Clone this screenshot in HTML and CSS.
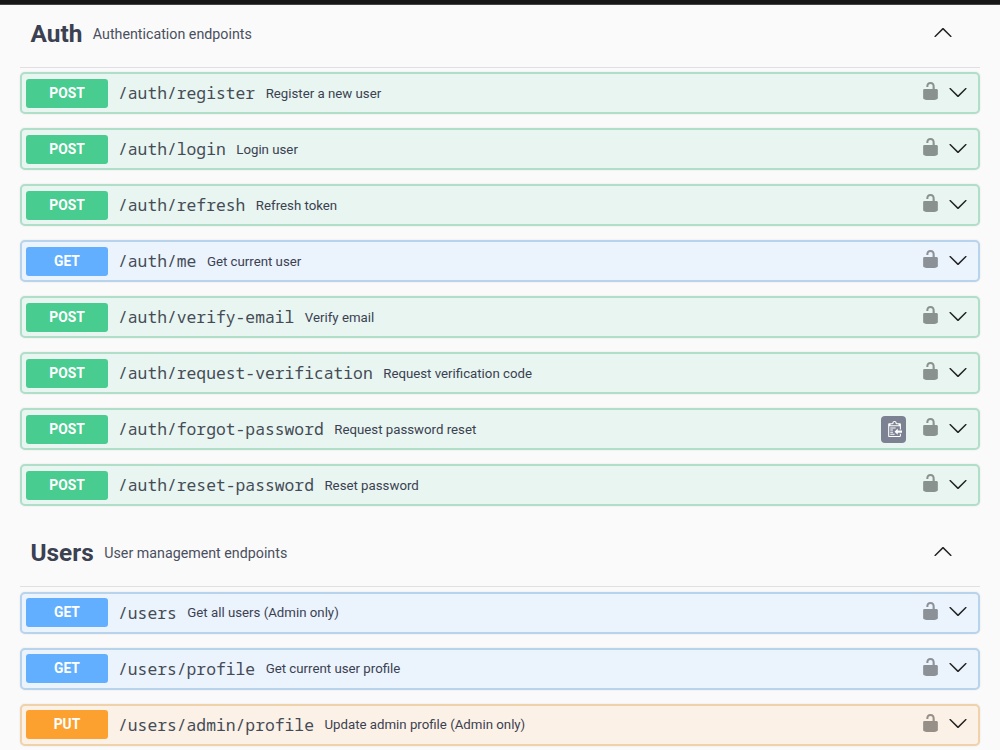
FILE: index.html
```
<!DOCTYPE html>
<html lang="en">
<head>
<meta charset="utf-8">
<title>API documentation</title>
<link rel="stylesheet" href="styles.css">
</head>
<body>
<svg class="sprite" aria-hidden="true">
  <symbol id="lock" viewBox="0 0 20 20" preserveAspectRatio="none"><path d="M15.800 8H14V5.600C14 2.703 12.665 1 10 1 7.334 1 6 2.703 6 5.600V6h2v-.801C8 3.754 8.797 3 10 3c1.203 0 2 .754 2 2.199V8H4c-.553 0-1 .646-1 1.199V17c0 .549.428 1.139.951 1.307l1.197.387C5.672 18.861 6.550 19 7.100 19h5.800c.549 0 1.428-.139 1.951-.307l1.196-.387c.524-.167.953-.757.953-1.306V9.199C17 8.646 16.352 8 15.800 8z"/></symbol>
  <symbol id="arrow" viewBox="0 0 20 20"><path d="M17.418 6.109c.272-.268.709-.268.979 0s.271.701 0 .969l-7.908 7.830c-.270.268-.707.268-.979 0l-7.908-7.830c-.270-.268-.270-.701 0-.969.271-.268.709-.268.979 0L10 13.250l7.418-7.141z"/></symbol>
  <symbol id="clip" viewBox="0 0 15 16"><path fill-rule="evenodd" d="M4 12h4v1H4v-1zm5-6H4v1h5V6zm2 3V7l-3 3 3 3v-2h5V9h-5zM6.500 8H4v1h2.500V8zM4 11h2.500v-1H4v1zm9 1h1v2c-.020.280-.110.520-.300.700-.190.180-.420.280-.700.300H3c-.550 0-1-.450-1-1V3c0-.550.450-1 1-1h3c0-1.110.890-2 2-2 1.110 0 2 .890 2 2h3c.550 0 1 .450 1 1v5h-1V5H3v9h10v-2zM4 4h8c0-.550-.450-1-1-1h-1c-.550 0-1-.450-1-1s-.450-1-1-1-1 .450-1 1-.450 1-1 1H5c-.550 0-1 .450-1 1z"/></symbol>
</svg>
<div class="topbar"></div>
<main class="docs">
  <section class="group">
    <header class="group-head"><h2>Auth</h2><p>Authentication endpoints</p><svg class="arrow up"><use href="#arrow"/></svg></header>
    <div class="row post"><span class="method">POST</span><code>/auth/register</code><span class="summary">Register a new user</span><svg class="lock"><use href="#lock"/></svg><svg class="arrow"><use href="#arrow"/></svg></div>
    <div class="row post"><span class="method">POST</span><code>/auth/login</code><span class="summary">Login user</span><svg class="lock"><use href="#lock"/></svg><svg class="arrow"><use href="#arrow"/></svg></div>
    <div class="row post"><span class="method">POST</span><code>/auth/refresh</code><span class="summary">Refresh token</span><svg class="lock"><use href="#lock"/></svg><svg class="arrow"><use href="#arrow"/></svg></div>
    <div class="row get"><span class="method">GET</span><code>/auth/me</code><span class="summary">Get current user</span><svg class="lock"><use href="#lock"/></svg><svg class="arrow"><use href="#arrow"/></svg></div>
    <div class="row post"><span class="method">POST</span><code>/auth/verify-email</code><span class="summary">Verify email</span><svg class="lock"><use href="#lock"/></svg><svg class="arrow"><use href="#arrow"/></svg></div>
    <div class="row post"><span class="method">POST</span><code>/auth/request-verification</code><span class="summary">Request verification code</span><svg class="lock"><use href="#lock"/></svg><svg class="arrow"><use href="#arrow"/></svg></div>
    <div class="row post"><span class="method">POST</span><code>/auth/forgot-password</code><span class="summary">Request password reset</span><span class="copy"><svg><use href="#clip"/></svg></span><svg class="lock"><use href="#lock"/></svg><svg class="arrow"><use href="#arrow"/></svg></div>
    <div class="row post"><span class="method">POST</span><code>/auth/reset-password</code><span class="summary">Reset password</span><svg class="lock"><use href="#lock"/></svg><svg class="arrow"><use href="#arrow"/></svg></div>
  </section>
  <section class="group">
    <header class="group-head"><h2>Users</h2><p>User management endpoints</p><svg class="arrow up"><use href="#arrow"/></svg></header>
    <div class="row get"><span class="method">GET</span><code>/users</code><span class="summary">Get all users (Admin only)</span><svg class="lock"><use href="#lock"/></svg><svg class="arrow"><use href="#arrow"/></svg></div>
    <div class="row get"><span class="method">GET</span><code>/users/profile</code><span class="summary">Get current user profile</span><svg class="lock"><use href="#lock"/></svg><svg class="arrow"><use href="#arrow"/></svg></div>
    <div class="row put"><span class="method">PUT</span><code>/users/admin/profile</code><span class="summary">Update admin profile (Admin only)</span><svg class="lock"><use href="#lock"/></svg><svg class="arrow"><use href="#arrow"/></svg></div>
  </section>
</main>
</body>
</html>
```
FILE: styles.css
```
* { box-sizing: border-box; }
html { height: 100%; overflow: hidden; }
body { margin: 0; height: 750px; overflow: hidden; background: #fafafa; color: #3b4151; font-family: Roboto, sans-serif; }
.sprite { position: absolute; width: 0; height: 0; }
.topbar { height: 5px; background: #171717; border-bottom: 1px solid #444; }
.docs { padding: 0 20px; }
.group-head { display: flex; align-items: center; height: 63px; padding: 0 27px 5px 10.5px; margin-bottom: 4px; border-bottom: 1px solid #e2dfe2; }
.group + .group .group-head { margin-top: 19px; height: 62px; margin-bottom: 4.6px; }
.group-head h2 { margin: 0 10.5px 0 0; font-size: 24.4px; font-weight: 700; line-height: 30px; }
.group-head p { margin: 0 auto 0 0; font-size: 14.25px; line-height: 20px; color: #4a4f5e; }
.row { display: flex; align-items: center; height: 42px; margin-bottom: 14px; padding: 0 10px 0 4px; border: 2px solid; border-radius: 5px; box-shadow: 0 0 2px rgba(0, 0, 0, .1); }
.post { background: #e8f5f0; border-color: #b0dfc9; }
.get { background: #ebf3fd; border-color: #b8d3ec; }
.put { background: #fbf1e6; border-color: #efd2aa; }
.method { width: 82px; height: 29px; margin-right: 10px; border-radius: 3px; color: #fff; font-size: 13.8px; font-weight: 700; line-height: 29px; text-align: center; }
.post .method { background: #49cc90; }
.get .method { background: #61affe; }
.put .method { background: #fca130; }
code { font-family: "Noto Sans Mono", "Noto Sans Mono CJK SC", "DejaVu Sans Mono", monospace; font-size: 16.33px; line-height: 24px; color: #444b56; }
.summary { margin: 0 auto 0 10.5px; padding-top: 1px; font-size: 13.25px; line-height: 20px; }
.arrow { width: 20px; height: 20px; margin-bottom: 3px; fill: #222; }
.up { margin-bottom: 2px; transform: rotate(180deg); }
.lock { width: 21px; height: 20px; margin: 0 7px 4px 0; fill: #000; opacity: .4; }
.copy { display: flex; align-items: center; justify-content: center; width: 25px; height: 27px; margin-right: 14px; border-radius: 4px; background: #7d8293; }
.copy svg { width: 16px; height: 17px; fill: #fff; }
```
